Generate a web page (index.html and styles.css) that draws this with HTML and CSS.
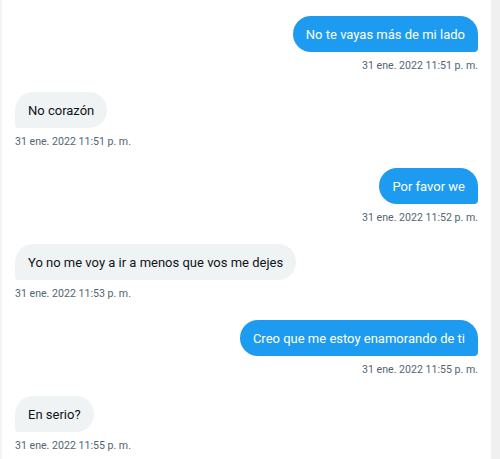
FILE: index.html
```html
<!DOCTYPE html>
<html lang="es">
<head>
<meta charset="utf-8">
<link rel="stylesheet" href="styles.css">
</head>
<body>
<div class="page">
  <div class="chat">
    <div class="msg sent">
      <div class="bubble">No te vayas más de mi lado</div>
      <div class="time">31 ene. 2022 11:51 p. m.</div>
    </div>
    <div class="msg recv">
      <div class="bubble">No corazón</div>
      <div class="time">31 ene. 2022 11:51 p. m.</div>
    </div>
    <div class="msg sent">
      <div class="bubble">Por favor we</div>
      <div class="time">31 ene. 2022 11:52 p. m.</div>
    </div>
    <div class="msg recv">
      <div class="bubble">Yo no me voy a ir a menos que vos me dejes</div>
      <div class="time">31 ene. 2022 11:53 p. m.</div>
    </div>
    <div class="msg sent">
      <div class="bubble">Creo que me estoy enamorando de ti</div>
      <div class="time">31 ene. 2022 11:55 p. m.</div>
    </div>
    <div class="msg recv">
      <div class="bubble">En serio?</div>
      <div class="time">31 ene. 2022 11:55 p. m.</div>
    </div>
  </div>
  <div class="rail"></div>
</div>
</body>
</html>
```

FILE: styles.css
```css
html, body {
  margin: 0;
  padding: 0;
  background: #ffffff;
}
.page {
  display: flex;
  width: 500px;
  height: 459px;
  overflow: hidden;
}
.chat {
  flex: 1;
  border-left: 2px solid #f3f3f3;
  padding: 16px 13px 0 13px;
  display: flex;
  flex-direction: column;
  gap: 18px;
  font-family: Roboto, "Noto Sans", sans-serif;
}
.rail {
  width: 9px;
  background: #f0f0f0;
}
.msg {
  display: flex;
  flex-direction: column;
}
.msg.sent { align-items: flex-end; }
.msg.recv { align-items: flex-start; }
.bubble {
  height: 36px;
  box-sizing: border-box;
  padding: 0 13px;
  display: flex;
  align-items: center;
  font-size: 13px;
  border-radius: 18px;
  white-space: nowrap;
}
.sent .bubble {
  background: #1d9bf0;
  color: #ffffff;
  border-bottom-right-radius: 4px;
}
.recv .bubble {
  background: #eff3f4;
  color: #0f1419;
  border-bottom-left-radius: 4px;
}
.time {
  margin-top: 6px;
  line-height: 16px;
  font-size: 10.6px;
  color: #536471;
}
```
